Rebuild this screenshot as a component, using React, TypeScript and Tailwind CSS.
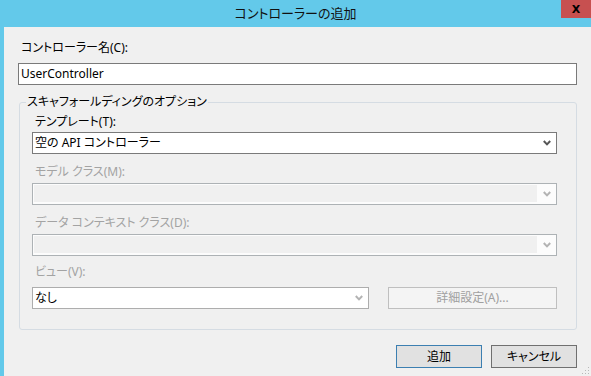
import React from "react";

const FONT = "font-['Noto_Sans','Noto_Sans_CJK_JP',sans-serif] [font-feature-settings:'palt']";

function Chevron({ disabled }: { disabled?: boolean }) {
  return (
    <svg width="8" height="6" viewBox="0 0 8 6" className="block">
      <polyline
        points="0.8,1 4,4.4 7.2,1"
        fill="none"
        stroke={disabled ? "#b3b3b3" : "#555555"}
        strokeWidth="2"
      />
    </svg>
  );
}

function Select({ value, disabled, white }: { value?: string; disabled?: boolean; white?: boolean }) {
  if (disabled && !white) {
    return (
      <div className="flex h-[22px] border border-[#adb2b5] bg-[#fcfcfc]">
        <div className="flex-1 mt-[1px] mb-[2px] ml-[1px] bg-[#f0f0f0]" />
        <div className="w-[19px] flex items-center justify-center">
          <Chevron disabled />
        </div>
      </div>
    );
  }
  return (
    <div className={`flex h-[22px] items-center border bg-white ${disabled ? "border-[#adadad]" : "border-[#7a7a7a]"}`}>
      <span className="flex-1 pl-[2px] text-[12px] leading-[16px] text-black">{value}</span>
      <div className="w-[19px] flex items-center justify-center">
        <Chevron disabled={disabled} />
      </div>
    </div>
  );
}

function Label({ text, disabled, className = "" }: { text: string; disabled?: boolean; className?: string }) {
  return (
    <div className={`h-[16px] ml-[3px] text-[12px] leading-[16px] ${disabled ? "text-[#a3a3a3]" : "text-black"} ${className}`}>
      {text}
    </div>
  );
}

export default function App() {
  return (
    <div className={`w-[591px] h-[376px] bg-[#63c9ea] flex flex-col overflow-hidden ${FONT}`}>
      {/* title bar */}
      <div className="relative h-[27px] shrink-0 flex items-center justify-center pb-[1px]">
        <span className="text-[13px] leading-[16px] text-[#111]">コントローラーの追加</span>
        <div className="absolute right-0 top-0 w-[30px] h-[18px] bg-[#c75050] flex items-center justify-center">
          <span className="font-['DejaVu_Sans',sans-serif] text-[11px] font-bold leading-none text-black">X</span>
        </div>
      </div>

      {/* body */}
      <div className="relative flex-1 ml-[4px] bg-[#f0f0f0] pl-[14px] pr-[14px] pt-[13px]">
        <div className="h-[16px] ml-[3px] text-[12px] leading-[16px] text-black">コントローラー名(C):</div>
        <div className="mt-[7px] h-[22px] border border-[#7a7a7a] bg-white flex items-center pl-[2px] text-[12px] leading-[16px] text-black">
          UserController
        </div>

        <fieldset className="mt-[9px] ml-[1px] border border-[#d5dce3] rounded-[3px] pl-[12px] pr-[19px] pb-[20px] pt-[4px]">
          <legend className="ml-[-6px] px-[1px] text-[12px] leading-[16px] text-black">スキャフォールディングのオプション</legend>

          <Label text="テンプレート(T):" />
          <div className="mt-[2px]">
            <Select value="空の API コントローラー" />
          </div>

          <Label text="モデル クラス(M):" disabled className="mt-[10px]" />
          <div className="mt-[3px]">
            <Select disabled />
          </div>

          <Label text="データ コンテキスト クラス(D):" disabled className="mt-[10px]" />
          <div className="mt-[3px]">
            <Select disabled />
          </div>

          <Label text="ビュー(V):" disabled className="mt-[8px]" />
          <div className="mt-[7px] flex gap-[19px]">
            <div className="w-[337px]">
              <Select value="なし" disabled white />
            </div>
            <button className="flex-1 h-[22px] border border-[#bfbfbf] bg-[#f4f4f4] text-[12px] leading-[16px] text-[#a0a0a0]">
              詳細設定(A)...
            </button>
          </div>
        </fieldset>

        <div className="mt-[15px] flex justify-end gap-[9px]">
          <button className="w-[86px] h-[23px] border border-[#3c7fb1] bg-[#e1e1e1] text-[12px] leading-[16px] text-black">
            追加
          </button>
          <button className="w-[86px] h-[23px] border border-[#707070] bg-[#e1e1e1] text-[12px] leading-[16px] text-black">
            キャンセル
          </button>
        </div>

        {/* resize grip */}
        <svg width="8" height="8" viewBox="0 0 8 8" className="absolute right-[1px] bottom-[1px]">
          <rect x="6" y="0" width="1" height="1" fill="#b8b8b8" />
          <rect x="3" y="3" width="1" height="1" fill="#b8b8b8" />
          <rect x="6" y="3" width="1" height="1" fill="#b8b8b8" />
          <rect x="0" y="6" width="1" height="1" fill="#b8b8b8" />
          <rect x="3" y="6" width="1" height="1" fill="#b8b8b8" />
          <rect x="6" y="6" width="1" height="1" fill="#b8b8b8" />
        </svg>
      </div>
    </div>
  );
}
